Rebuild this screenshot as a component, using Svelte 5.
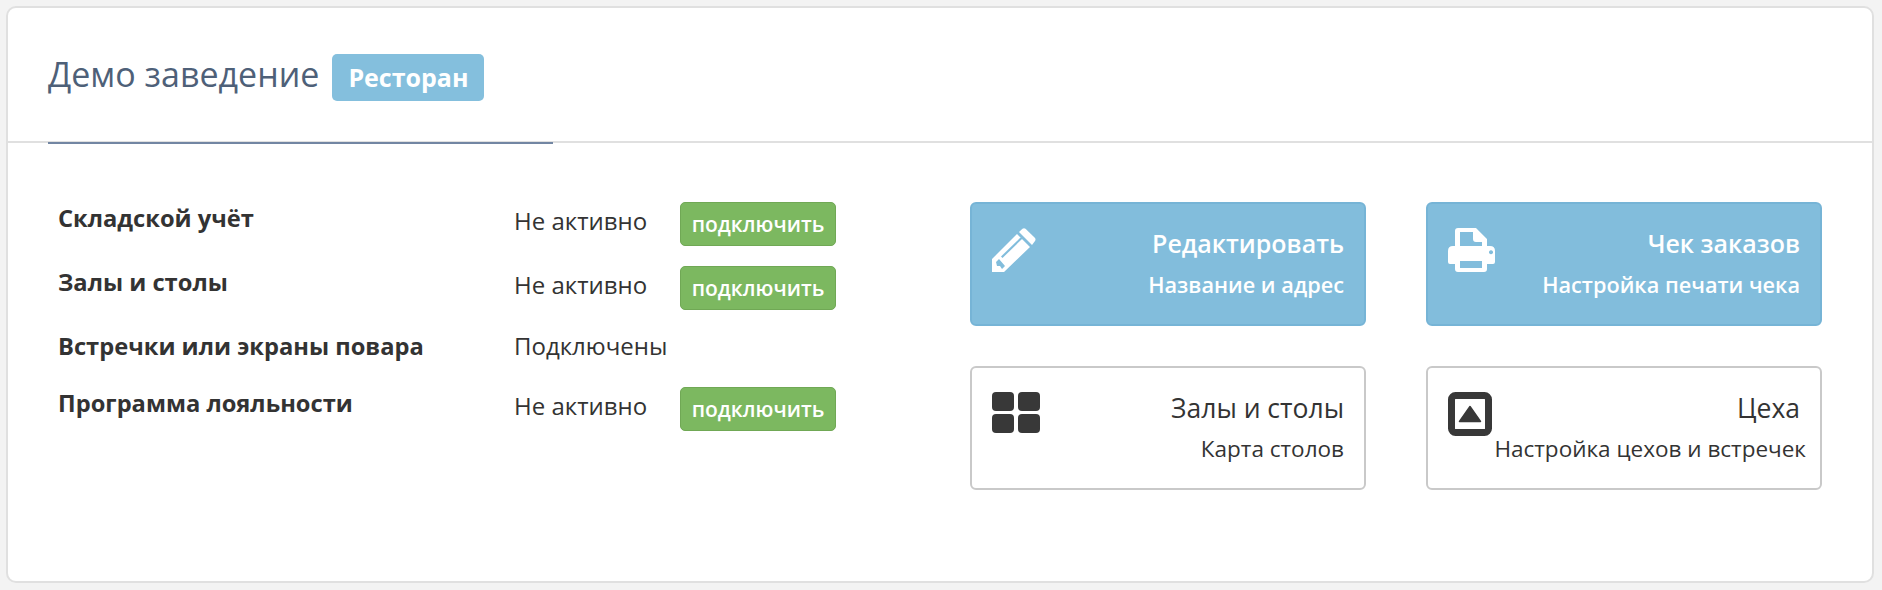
<script>
  const modules = [
    { name: 'Складской учёт', status: 'Не активно', action: true },
    { name: 'Залы и столы', status: 'Не активно', action: true },
    { name: 'Встречки или экраны повара', status: 'Подключены', action: false },
    { name: 'Программа лояльности', status: 'Не активно', action: true }
  ];
</script>

<div class="page">
  <div class="card">
    <div class="head">
      <h1>Демо заведение</h1>
      <span class="label">Ресторан</span>
    </div>
    <div class="rule"><div class="accent"></div></div>

    <div class="body">
      <div class="modules">
        {#each modules as m}
          <div class="row" class:plain={!m.action}>
            <div class="name">{m.name}</div>
            <div class="status">{m.status}</div>
            {#if m.action}
              <button class="connect">подключить</button>
            {/if}
          </div>
        {/each}
      </div>

      <div class="tiles">
        <div class="tile blue">
          <svg class="icon" viewBox="0 0 44 44" width="44" height="44">
            <path fill="#fff" d="M27 4 L30.500 0.800 Q32 -0.200 33.500 0.800 L43 10 Q44 11.500 43 13 L40 17 Z"/>
            <path fill="#fff" fill-rule="evenodd" d="M0 31 L25 6 L38 19 L12 44 L0 44 Z M4 34 L7 31 L13 38 L10 41 L8 38 L5 38 Z M9 28.500 L10.500 30 L30 11 L28.500 9.500 Z"/>
          </svg>
          <div class="text">
            <div class="title">Редактировать</div>
            <div class="sub">Название и адрес</div>
          </div>
        </div>
        <div class="tile blue">
          <svg class="icon" viewBox="0 0 47 44" width="47" height="44">
            <path fill="#fff" fill-rule="evenodd" d="M7 3 Q7 0 10 0 L28 0 L39 11 L39 18 L42 18 Q47 18 47 23 L47 34 Q47 36 45 36 L39 36 L39 41 Q39 44 36 44 L10 44 Q7 44 7 41 L7 36 L2 36 Q0 36 0 34 L0 23 Q0 18 5 18 L7 18 Z M12 4 L12 18 L34 18 L34 14 L28 14 Q25 14 25 11 L25 4 Z M12 33 L12 40 L34 40 L34 33 Z M43 22.300 a2 2 0 1 0 0.010 0 Z"/>
          </svg>
          <div class="text">
            <div class="title">Чек заказов</div>
            <div class="sub">Настройка печати чека</div>
          </div>
        </div>
        <div class="tile">
          <svg class="icon" viewBox="0 0 48 41" width="48" height="41">
            <rect width="22" height="19" rx="4" fill="#383838"/>
            <rect x="26" width="22" height="19" rx="4" fill="#383838"/>
            <rect y="22" width="22" height="19" rx="4" fill="#383838"/>
            <rect x="26" y="22" width="22" height="19" rx="4" fill="#383838"/>
          </svg>
          <div class="text">
            <div class="title">Залы и столы</div>
            <div class="sub">Карта столов</div>
          </div>
        </div>
        <div class="tile">
          <svg class="icon" viewBox="0 0 44 44" width="44" height="44">
            <rect x="3.500" y="3.500" width="37" height="37" rx="4" fill="none" stroke="#383838" stroke-width="7"/>
            <path fill="#383838" d="M11.500 29.500 L22 14.500 L32.500 29.500 Z" stroke="#383838" stroke-width="1.500" stroke-linejoin="round"/>
          </svg>
          <div class="text">
            <div class="title">Цеха</div>
            <div class="sub wide">Настройка цехов и встречек</div>
          </div>
        </div>
      </div>
    </div>
  </div>
</div>

<style>
  :global(body) {
    margin: 0;
    background: #f3f3f3;
  }

  .page {
    padding: 6px 8px 6px 6px;
    font-family: "Open Sans", "Noto Sans", sans-serif;
    color: #333;
  }

  .card {
    box-sizing: border-box;
    height: 577px;
    background: #fff;
    border: 2px solid #e0e0e0;
    border-radius: 10px;
  }

  .head {
    display: flex;
    align-items: center;
    height: 133px;
    padding-left: 40px;
  }

  h1 {
    margin: 0 13px 2px 0;
    font-size: 34px;
    font-weight: 400;
    color: #4e6078;
  }

  .label {
    display: block;
    margin-top: 6px;
    padding: 0 16px;
    line-height: 47px;
    font-size: 25px;
    font-weight: 700;
    color: #fff;
    background: #84bfdd;
    border-radius: 5px;
  }

  .rule {
    height: 2px;
    background: #e0e0e0;
    margin-bottom: 59px;
  }

  .accent {
    position: relative;
    top: 1px;
    margin-left: 40px;
    width: 505px;
    height: 2px;
    background: #7286a3;
  }

  .body {
    display: flex;
    padding-left: 50px;
  }

  .modules {
    width: 912px;
  }

  .row {
    display: flex;
    height: 44px;
    margin-bottom: 20px;
  }

  .row.plain {
    height: 37px;
    margin-bottom: 20px;
  }

  .name {
    width: 456px;
    font-size: 23.700px;
    font-weight: 700;
    line-height: 33px;
  }

  .status {
    width: 166px;
    font-size: 24px;
    line-height: 38px;
  }

  .plain .status {
    line-height: 32px;
  }

  .connect {
    width: 156px;
    height: 44px;
    padding: 0;
    font-family: inherit;
    font-size: 21px;
    font-weight: 600;
    color: #fff;
    background: #7cb860;
    border: 1px solid #70a855;
    border-radius: 5px;
  }

  .tiles {
    display: grid;
    grid-template-columns: 396px 396px;
    grid-auto-rows: 124px;
    column-gap: 60px;
    row-gap: 40px;
  }

  .tile {
    box-sizing: border-box;
    display: flex;
    justify-content: space-between;
    padding: 24px 20px 0 20px;
    background: #fff;
    border: 2px solid #c9c9c9;
    border-radius: 6px;
    color: #333;
  }

  .tile.blue {
    color: #fff;
    background: #82bddc;
    border-color: #76b4d6;
  }

  .text {
    margin-top: -1px;
    text-align: right;
  }

  .blue .text {
    margin-top: -2px;
  }

  .title {
    font-size: 26.500px;
    line-height: 34px;
  }

  .blue .title {
    font-size: 25px;
    font-weight: 600;
  }

  .sub {
    margin-top: 9px;
    font-size: 22.500px;
    line-height: 30px;
  }

  .blue .sub {
    margin-top: 10px;
    font-size: 21.700px;
    font-weight: 600;
  }

  .wide {
    margin-right: -6px;
    white-space: nowrap;
  }

  .icon {
    flex: none;
  }
</style>
